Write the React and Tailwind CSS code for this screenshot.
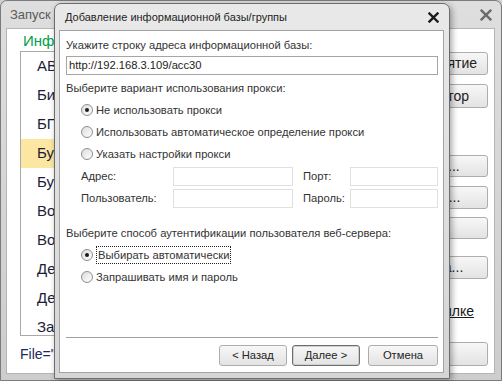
import React from "react";

function CloseIcon({ color = "#1a1a1a", size = 11, stroke = 2.4 }) {
    return (
        <svg width={size} height={size} viewBox="0 0 11 11">
            <path d="M1.5 1.5 L9.5 9.5 M9.5 1.5 L1.5 9.5" stroke={color} strokeWidth={stroke} strokeLinecap="square" />
        </svg>
    );
}

function Radio({ checked }) {
    return (
        <span className="w-[12px] h-[12px] rounded-full border border-[#8c8e8f] bg-gradient-to-br from-[#dcdcdc] to-white flex items-center justify-center shrink-0">
            {checked && <span className="w-[4px] h-[4px] rounded-full bg-[#1c1c1c]" />}
        </span>
    );
}

function RadioRow({ checked, focused, children }) {
    return (
        <div className="h-[22px] flex items-center pl-[15px] gap-[3px]">
            <Radio checked={checked} />
            {focused ? (
                <span className="border border-dotted border-[#222] leading-[16px] px-[1px]">{children}</span>
            ) : (
                <span className="leading-[16px]">{children}</span>
            )}
        </div>
    );
}

function Btn({ children, primary, className = "" }) {
    return (
        <div
            className={`flex items-center justify-center whitespace-nowrap rounded-[3px] bg-gradient-to-b from-[#f7f7f7] to-[#e3e3e3] text-[#222] ${
                primary ? "border border-[#6e6e6e] shadow-[inset_0_0_0_1px_#d0d0d0]" : "border border-[#adadad]"
            } ${className}`}
        >
            {children}
        </div>
    );
}

const items = ["АВ", "Бизнес", "БП", "Бухгалтерия", "Бухгалтерия", "Водоканал", "Водоснабжение", "Демо", "Демо", "Зарплата"];

export default function App() {
    return (
        <div className="relative w-[502px] h-[381px] overflow-hidden bg-[#cfcfcf] font-['Liberation_Sans',Arial,sans-serif]">
            {/* background window */}
            <div className="flex flex-col h-[381px] rounded-t-[7px] border border-[#7b7b7b] bg-gradient-to-b from-[#dedede] to-[#cdcdcd]">
                <div className="h-[27px] shrink-0 flex items-center justify-between pl-[9px] pr-[9px]">
                    <span className="text-[13px] text-[#5a5a5a]">Запуск 1С</span>
                    <CloseIcon color="#6b6b6b" size={12} stroke={2.2} />
                </div>
                <div className="flex-1 ml-[5px] mr-[6px] mb-[6px] bg-white border border-[#b5b5b5] flex flex-col pl-[13px] pr-[6px]">
                    <div className="h-[22px] pt-[2px] pl-[3px] text-[15px] leading-[20px] text-[#00a04a]">Информационные базы</div>
                    <div className="flex gap-[8px] h-[285px]">
                        <div className="flex-1 border border-[#a9a9a9] overflow-hidden">
                            {items.map((t, i) => (
                                <div
                                    key={i}
                                    className={`h-[29px] flex items-center pl-[16px] text-[15px] text-[#1d1d3a] ${i === 3 ? "bg-[#fbe7a1]" : ""}`}
                                >
                                    {t}
                                </div>
                            ))}
                        </div>
                        <div className="w-[130px] flex flex-col text-[14px]">
                            <Btn className="mt-[1px] h-[23px]">1С:Предприятие</Btn>
                            <Btn className="mt-[9px] h-[24px]">Конфигуратор</Btn>
                            <Btn className="mt-[47px] h-[22px]">Добавить...</Btn>
                            <Btn className="mt-[9px] h-[23px]">Изменить...</Btn>
                            <Btn className="mt-[8px] h-[22px]">Удалить</Btn>
                            <Btn className="mt-[17px] h-[23px]">Настройка...</Btn>
                            <div className="mt-[22px] whitespace-nowrap text-right pr-[14px] underline text-[#1a1a1a]">По ссылке</div>
                        </div>
                    </div>
                    <div className="flex items-center justify-between mt-[6px] h-[24px]">
                        <span className="text-[14px] text-[#1d2a5a]">File="C:\Base"</span>
                        <Btn className="w-[130px] h-[24px] text-[14px]">Выход</Btn>
                    </div>
                </div>
            </div>

            {/* modal dialog */}
            <div className="absolute left-[54px] top-[3px] w-[396px] h-[376px] rounded-t-[7px] border border-[#6c6c6c] bg-gradient-to-b from-[#e9e9e9] to-[#d5d5d5] flex flex-col shadow-[2px_2px_6px_rgba(0,0,0,0.35)]">
                <div className="h-[26px] shrink-0 flex items-center justify-between pl-[10px] pr-[10px]">
                    <span className="text-[11px] text-[#1e1e1e]">Добавление информационной базы/группы</span>
                    <CloseIcon />
                </div>
                <div className="flex-1 ml-[4px] mr-[5px] mb-[5px] bg-white border border-[#a3a3a3] flex flex-col pl-[6px] pr-[5px] pt-[3px] text-[11.2px] text-[#333]">
                    <div className="h-[22px] flex items-center">Укажите строку адреса информационной базы:</div>
                    <div className="h-[19px] border border-[#a5a5a5] flex items-center pl-[2px] text-[#222]">http://192.168.3.109/acc30</div>
                    <div className="mt-[2px] h-[22px] flex items-center">Выберите вариант использования прокси:</div>
                    <RadioRow checked>Не использовать прокси</RadioRow>
                    <RadioRow>Использовать автоматическое определение прокси</RadioRow>
                    <RadioRow>Указать настройки прокси</RadioRow>
                    <div className="h-[22px] flex items-center pl-[15px]">
                        <span className="w-[92px]">Адрес:</span>
                        <span className="w-[120px] h-[19px] border border-[#e0e0e0]" />
                        <span className="w-[47px] ml-[10px]">Порт:</span>
                        <span className="flex-1 h-[19px] border border-[#e0e0e0]" />
                    </div>
                    <div className="h-[22px] flex items-center pl-[15px]">
                        <span className="w-[92px]">Пользователь:</span>
                        <span className="w-[120px] h-[19px] border border-[#e0e0e0]" />
                        <span className="w-[47px] ml-[10px]">Пароль:</span>
                        <span className="flex-1 h-[19px] border border-[#e0e0e0]" />
                    </div>
                    <div className="mt-[13px] h-[22px] flex items-center">Выберите способ аутентификации пользователя веб-сервера:</div>
                    <RadioRow checked focused>Выбирать автоматически</RadioRow>
                    <RadioRow>Запрашивать имя и пароль</RadioRow>
                    <div className="flex-1" />
                    <div className="h-px bg-[#a0a0a0]" />
                    <div className="mt-[7px] mb-[6px] h-[21px] flex justify-end gap-[5px]">
                        <Btn className="w-[68px]">&lt; Назад</Btn>
                        <Btn primary className="w-[68px]">Далее &gt;</Btn>
                        <Btn className="w-[70px] ml-[3px]">Отмена</Btn>
                    </div>
                </div>
            </div>
        </div>
    );
}
